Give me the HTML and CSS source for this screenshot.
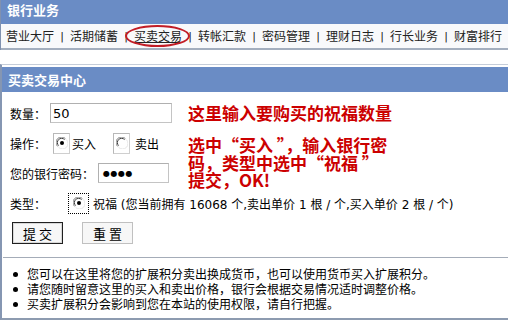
FILE: index.html
```html
<!DOCTYPE html>
<html lang="zh-CN">
<head>
  <meta charset="UTF-8" />
  <title>买卖交易中心</title>
  <link rel="stylesheet" href="styles.css">
</head>
<body>

  <div class="panel bank">
    <div class="panel-head">银行业务</div>
    <div class="nav">
      <a>营业大厅</a><span class="sep">|</span>
      <a>活期储蓄</a><span class="sep">|</span>
      <a class="current">买卖交易</a><span class="sep">|</span>
      <a>转帐汇款</a><span class="sep">|</span>
      <a>密码管理</a><span class="sep">|</span>
      <a>理财日志</a><span class="sep">|</span>
      <a>行长业务</a><span class="sep">|</span>
      <a>财富排行</a>
    </div>
  </div>

  <div class="panel trade">
    <div class="panel-head">买卖交易中心</div>

    <form class="form">
      <div class="row">
        <label class="lbl lbl-qty">数量：</label>
        <input class="field qty" type="text" value="50">
      </div>
      <div class="row">
        <label class="lbl lbl-op">操作：</label>
        <span class="opt"><svg width="12" height="12" viewBox="0 0 12 12"><circle cx="6" cy="6" r="5.5" fill="#fff"/><path d="M1.6 9.4A5 5 0 0 1 9.4 1.6" fill="none" stroke="#808080"/><path d="M2.6 8.6A3.8 3.8 0 0 1 8.6 2.6" fill="none" stroke="#404040"/><path d="M10.4 2.6A5 5 0 0 1 2.6 10.4" fill="none" stroke="#e4e4e4"/><circle cx="6" cy="6" r="2" fill="#000"/></svg></span>
        <span class="opt-text">买入</span>
        <span class="opt opt-2"><svg width="12" height="12" viewBox="0 0 12 12"><circle cx="6" cy="6" r="5.5" fill="#fff"/><path d="M1.6 9.4A5 5 0 0 1 9.4 1.6" fill="none" stroke="#808080"/><path d="M2.6 8.6A3.8 3.8 0 0 1 8.6 2.6" fill="none" stroke="#404040"/><path d="M10.4 2.6A5 5 0 0 1 2.6 10.4" fill="none" stroke="#e4e4e4"/></svg></span>
        <span class="opt-text wide">卖出</span>
      </div>
      <div class="row">
        <label class="lbl lbl-pwd">您的银行密码：</label>
        <span class="field pwd">●●●●</span>
      </div>
      <div class="row">
        <label class="lbl lbl-type">类型：</label>
        <span class="focus"><svg width="12" height="12" viewBox="0 0 12 12"><circle cx="6" cy="6" r="5.5" fill="#fff"/><path d="M1.6 9.4A5 5 0 0 1 9.4 1.6" fill="none" stroke="#808080"/><path d="M2.6 8.6A3.8 3.8 0 0 1 8.6 2.6" fill="none" stroke="#404040"/><path d="M10.4 2.6A5 5 0 0 1 2.6 10.4" fill="none" stroke="#e4e4e4"/><circle cx="6" cy="6" r="2" fill="#000"/></svg></span>
        <span class="type-text">祝福 (您当前拥有 16068 个,卖出单价 1 根 / 个,买入单价 2 根 / 个)</span>
      </div>
      <div class="row">
        <button type="button" class="btn btn-main">提 交</button>
        <button type="button" class="btn">重 置</button>
      </div>

      <!-- red notes written over the screenshot -->
      <p class="note note-1">这里输入要购买的祝福数量</p>
      <p class="note note-2">选中“买入 ”，输入银行密<br>码，类型中选中“祝福 ”<br>提交，OK!</p>
    </form>

    <ul class="tips">
      <li>您可以在这里将您的扩展积分卖出换成货币，也可以使用货币买入扩展积分。</li>
      <li>请您随时留意这里的买入和卖出价格，银行会根据交易情况适时调整价格。</li>
      <li>买卖扩展积分会影响到您在本站的使用权限，请自行把握。</li>
    </ul>
  </div>

</body>
</html>
```

FILE: styles.css
```css
body {
  margin: 0;
  width: 508px;
  height: 322px;
  overflow: hidden;
  background: #fff;
  color: #000;
  font: 12px "DejaVu Sans", "Noto Sans CJK SC", sans-serif;
}
.panel {
  border-left: 1px solid #7f91b0;
}
.panel-head {
  height: 24px;
  line-height: 24px;
  padding-left: 6px;
  background: #6a8cc5;
  color: #fff;
  font: bold 13px "Noto Sans CJK SC", sans-serif;
}
.nav {
  display: flex;
  align-items: center;
  height: 24px;
  padding-left: 5px;
  background: #f8f9fb;
  border-bottom: 2px solid #a3aebe;
  font-family: "Noto Sans CJK SC", sans-serif;
  color: #222;
}
.nav a {
  width: 48px;
  line-height: 16px;
  position: relative;
}
.nav .sep {
  width: 16px;
  text-align: center;
  font-family: "DejaVu Sans", sans-serif;
  font-size: 11px;
}
.nav .current {
  text-decoration: underline;
}
.nav .current::after {
  content: "";
  position: absolute;
  left: -9px;
  right: -8px;
  top: -3px;
  bottom: -3px;
  border: 2px solid #c21d26;
  border-radius: 50%;
}
.trade {
  margin-top: 14px;
  padding-top: 2px;
  border-top: 1px solid #c5cdd9;
  border-left: 2px solid #8596b2;
  border-bottom: 2px solid #8d9bb0;
}
.trade .panel-head {
  height: 25px;
  line-height: 25px;
}
.form {
  position: relative;
  display: flex;
  flex-direction: column;
  gap: 8px;
  margin: 0;
  padding: 10px 0 0 8px;
}
.row {
  display: flex;
  align-items: center;
  height: 22px;
}
.lbl {
  font-family: "Noto Sans CJK SC", sans-serif;
}
.lbl-qty { width: 40px; }
.lbl-op { width: 43px; }
.lbl-pwd { width: 88px; }
.lbl-type { width: 58px; }
.field {
  box-sizing: border-box;
  height: 20px;
  border: 1px solid #c4c4c4;
  border-top-color: #b0b0b0;
  border-left-color: #b0b0b0;
  padding: 0 2px;
  background: #fff;
  font: 13px "DejaVu Sans", sans-serif;
  outline: none;
}
.qty {
  width: 122px;
}
.pwd {
  display: flex;
  align-items: center;
  width: 71px;
  padding-left: 4px;
  font-size: 8px;
  letter-spacing: 0.5px;
}
.opt {
  box-sizing: border-box;
  display: inline-flex;
  align-items: center;
  justify-content: center;
  width: 17px;
  height: 21px;
  border: 1px solid #cfcfcf;
  border-top-color: #b8b8b8;
  border-left-color: #b8b8b8;
}
.opt-2 {
  margin-left: 17px;
}
.opt-text {
  margin-left: 2px;
  font-family: "Noto Sans CJK SC", sans-serif;
}
.opt-text.wide {
  margin-left: 5px;
}
.focus {
  box-sizing: border-box;
  display: inline-flex;
  align-items: center;
  justify-content: center;
  width: 21px;
  height: 21px;
  border: 1px dotted #000;
}
.type-text {
  margin-left: 4px;
}
.btn {
  box-sizing: border-box;
  width: 51px;
  height: 22px;
  margin: 0 0 0 2px;
  padding: 0;
  border: 1px solid #c0c0c0;
  background: #f7f7f7;
  color: #000;
  font: 13px "Noto Sans CJK SC", sans-serif;
}
.btn-main {
  border: 1px solid #202020;
  box-shadow: inset 0 0 0 1px #d8d8d8;
  margin-right: 17px;
}
.note {
  position: absolute;
  left: 186px;
  margin: 0;
  color: #cc0000;
  font: bold 17px "Noto Sans CJK SC", sans-serif;
}
.note-1 {
  top: 12px;
  line-height: 18px;
}
.note-2 {
  top: 44px;
  line-height: 17.5px;
}
.tips {
  list-style: none;
  margin: 13px 0 0 1px;
  padding: 8px 0 7px;
  border-top: 1px solid #a4acb8;
  font-family: "Noto Sans CJK SC", sans-serif;
  line-height: 15px;
}
.tips li::before {
  content: "";
  display: inline-block;
  width: 5px;
  height: 5px;
  margin: 0 9px 2px 10px;
  border-radius: 50%;
  background: #000;
  vertical-align: middle;
}
```
